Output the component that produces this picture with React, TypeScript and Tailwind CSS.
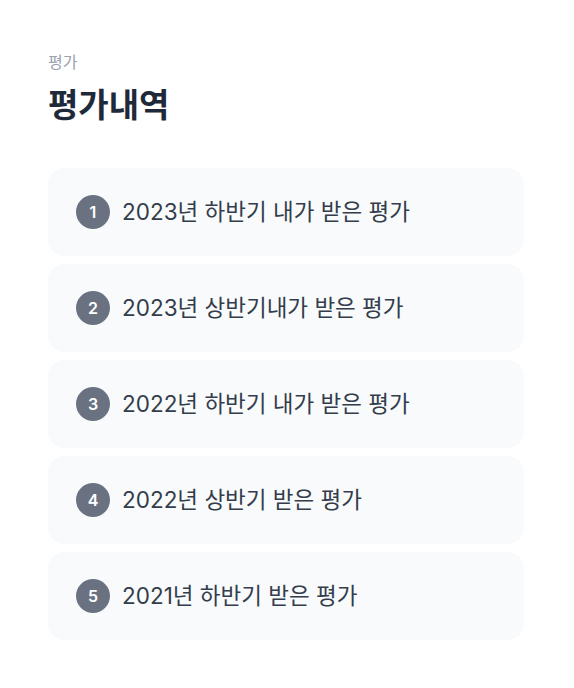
const items = [
  "2023년 하반기 내가 받은 평가",
  "2023년 상반기내가 받은 평가",
  "2022년 하반기 내가 받은 평가",
  "2022년 상반기 받은 평가",
  "2021년 하반기 받은 평가",
];

export default function App() {
  return (
    <div
      className="min-h-screen bg-white px-12 pt-[51px]"
      style={{ fontFamily: 'Inter, "Noto Sans CJK KR", sans-serif' }}
    >
      <p className="text-[16px] leading-[22px] text-gray-400">평가</p>
      <h1 className="mt-[12px] text-[33px] font-bold leading-10 text-gray-800">평가내역</h1>
      <ul className="mt-[43px] flex w-[476px] flex-col gap-2">
        {items.map((label, i) => (
          <li
            key={label}
            className="flex h-[88px] items-center gap-3 rounded-2xl bg-gray-50 px-7"
          >
            <span className="flex h-[34px] w-[34px] shrink-0 items-center justify-center rounded-full bg-gray-500 text-base font-semibold text-white">
              {i + 1}
            </span>
            <span className="text-[22.5px] text-[#333d4b]">{label}</span>
          </li>
        ))}
      </ul>
    </div>
  );
}
